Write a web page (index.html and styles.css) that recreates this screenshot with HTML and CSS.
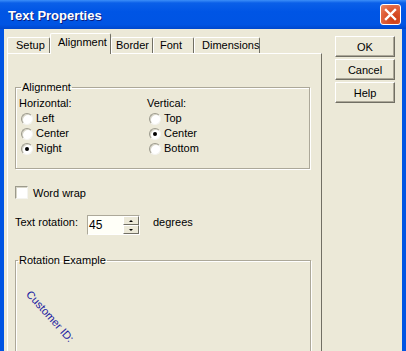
FILE: index.html
```html
<!DOCTYPE html>
<html lang="en">
<head>
    <meta charset="UTF-8">
    <title>Text Properties</title>
    <link rel="stylesheet" href="styles.css">
</head>
<body>
    <div class="window">
        <div class="titlebar">
            <span class="title">Text Properties</span>
            <span class="close">
                <svg width="13" height="13" viewBox="0 0 13 13">
                    <path d="M2 2 L11 11 M11 2 L2 11" stroke="#fff" stroke-width="2.4" stroke-linecap="square"/>
                </svg>
            </span>
        </div>
        <div class="client">
            <div class="sheet">
                <div class="tabs">
                    <span class="tab tab-setup">Setup</span>
                    <span class="tab tab-align active">Alignment</span>
                    <span class="tab tab-border">Border</span>
                    <span class="tab tab-font">Font</span>
                    <span class="tab tab-dim">Dimensions</span>
                </div>
                <div class="panel">
                    <fieldset class="group group-align">
                        <legend>Alignment</legend>
                        <div class="cols">
                            <div class="col">
                                <div class="row">Horizontal:</div>
                                <div class="row option"><span class="radio"></span>Left</div>
                                <div class="row option"><span class="radio"></span>Center</div>
                                <div class="row option"><span class="radio on"></span>Right</div>
                            </div>
                            <div class="col">
                                <div class="row">Vertical:</div>
                                <div class="row option"><span class="radio"></span>Top</div>
                                <div class="row option"><span class="radio on"></span>Center</div>
                                <div class="row option"><span class="radio"></span>Bottom</div>
                            </div>
                        </div>
                    </fieldset>

                    <div class="check-row"><span class="checkbox"></span>Word wrap</div>

                    <div class="rotation-row">
                        <span class="rotation-label">Text rotation:</span>
                        <span class="spin">
                            <span class="spin-value">45</span>
                            <span class="spin-buttons">
                                <span class="spin-btn"><span class="arrow-up"></span></span>
                                <span class="spin-btn"><span class="arrow-down"></span></span>
                            </span>
                        </span>
                        <span class="degrees">degrees</span>
                    </div>

                    <fieldset class="group group-example">
                        <legend>Rotation Example</legend>
                        <span class="sample">Customer ID:</span>
                    </fieldset>
                </div>
            </div>
            <div class="actions">
                <button>OK</button>
                <button>Cancel</button>
                <button>Help</button>
            </div>
        </div>
    </div>
</body>
</html>
```

FILE: styles.css
```css
* {
    box-sizing: border-box;
}

body {
    margin: 0;
    font-family: "Liberation Sans", Arial, sans-serif;
    font-size: 11px;
    color: #000;
}

.window {
    width: 406px;
    height: 351px;
    overflow: hidden;
    background: #0054e3;
    display: flex;
    flex-direction: column;
}

.titlebar {
    height: 29px;
    flex: none;
    display: flex;
    align-items: center;
    justify-content: space-between;
    padding: 0 5px 0 8px;
    background: linear-gradient(#3c8ef8 0, #0a5fe8 3px, #0055e5 40%, #0054e3 85%, #0047cc 100%);
}

.title {
    color: #fff;
    font-weight: bold;
    font-size: 13px;
    text-shadow: 1px 1px #0a1e80;
    padding-top: 1px;
}

.close {
    width: 21px;
    height: 21px;
    border: 1px solid #fff;
    border-radius: 3px;
    background: radial-gradient(circle at 70% 75%, #cc3a12, #e0603a 60%, #eb8a66);
    display: flex;
    align-items: center;
    justify-content: center;
}

.client {
    flex: 1;
    margin: 0 4px;
    background: #ece9d8;
    display: flex;
    padding: 4px 0 0 3px;
}

.sheet {
    width: 315px;
    display: flex;
    flex-direction: column;
}

.tabs {
    display: flex;
    align-items: flex-end;
    height: 20px;
}

.tab {
    height: 16px;
    line-height: 15px;
    padding-left: 6px;
    border: 1px solid #fff;
    border-right-color: #716f64;
    border-bottom: none;
    border-radius: 2px 2px 0 0;
    white-space: nowrap;
}

.tab.active {
    height: 21px;
    line-height: 17px;
    margin-bottom: -1px;
    position: relative;
    z-index: 1;
    background: #ece9d8;
}

.tab-setup { width: 43px; padding-left: 8px; }
.tab-align { width: 61px; padding-left: 7px; }
.tab-border { width: 42px; padding-left: 4px; }
.tab-font { width: 41px; }
.tab-dim { width: 66px; padding-left: 7px; }

.panel {
    flex: 1;
    border: 1px solid #fff;
    border-right-color: #716f64;
    border-bottom-color: #716f64;
    padding: 27px 0 0 7px;
}

.group {
    margin: 0;
    border: 1px solid #aca899;
    box-shadow: inset 1px 1px #fff, 1px 1px #fff;
}

.group legend {
    padding: 0 1px;
    margin-left: 2px;
    line-height: 13px;
}

.group-align {
    width: 295px;
    padding: 2px 0 12px 3px;
}

.cols {
    display: grid;
    grid-template-columns: 128px 1fr;
}

.row {
    height: 15px;
    line-height: 15px;
}

.option {
    display: flex;
    align-items: center;
    gap: 3px;
    padding-left: 2px;
}

.radio {
    width: 12px;
    height: 12px;
    border-radius: 50%;
    background: #fff;
    border: 1px solid;
    border-color: #9c9a8c #f4f4f0 #f4f4f0 #9c9a8c;
    box-shadow: inset 1px 1px #d8d6c8;
    display: flex;
    align-items: center;
    justify-content: center;
}

.radio.on::after {
    content: "";
    width: 4px;
    height: 4px;
    border-radius: 50%;
    background: #000;
}

.check-row {
    margin-top: 16px;
    height: 15px;
    display: flex;
    align-items: center;
    gap: 5px;
}

.checkbox {
    width: 13px;
    height: 13px;
    background: #fff;
    border: 1px solid;
    border-color: #9c9a8c #f4f4f0 #f4f4f0 #9c9a8c;
    box-shadow: inset 1px 1px #d8d6c8;
}

.rotation-row {
    margin-top: 15px;
    height: 20px;
    display: flex;
    align-items: flex-start;
}

.rotation-label {
    width: 72px;
    line-height: 15px;
}

.spin {
    width: 53px;
    height: 20px;
    display: flex;
    background: #fffff8;
    border: 1px solid;
    border-color: #aca899 #fff #fff #aca899;
}

.spin-value {
    flex: 1;
    line-height: 19px;
    padding-left: 1px;
    font-size: 12px;
}

.spin-buttons {
    width: 16px;
    display: flex;
    flex-direction: column;
}

.spin-btn {
    height: 9px;
    background: #ece9d8;
    border: 1px solid;
    border-color: #fff #716f64 #716f64 #fff;
    display: flex;
    align-items: center;
    justify-content: center;
}

.arrow-up {
    border-left: 2px solid transparent;
    border-right: 2px solid transparent;
    border-bottom: 2px solid #000;
}

.arrow-down {
    border-left: 2px solid transparent;
    border-right: 2px solid transparent;
    border-top: 2px solid #000;
}

.degrees {
    margin-left: 13px;
    line-height: 15px;
}

.group-example {
    margin-top: 19px;
    width: 296px;
    height: 110px;
    padding: 0;
    position: relative;
}

.sample {
    position: absolute;
    left: 17px;
    top: 21px;
    color: #1a1aa0;
    white-space: nowrap;
    line-height: 13px;
    transform-origin: 0 0;
    transform: rotate(48deg);
}

.actions {
    display: flex;
    flex-direction: column;
    gap: 2px;
    margin: 3px 0 0 13px;
}

.actions button {
    width: 60px;
    height: 21px;
    padding: 0;
    font-family: "Liberation Sans", Arial, sans-serif;
    font-size: 11px;
    color: #000;
    background: #ece9d8;
    border: 1px solid;
    border-color: #fff #716f64 #716f64 #fff;
    box-shadow: inset -1px -1px #aca899;
}
```
